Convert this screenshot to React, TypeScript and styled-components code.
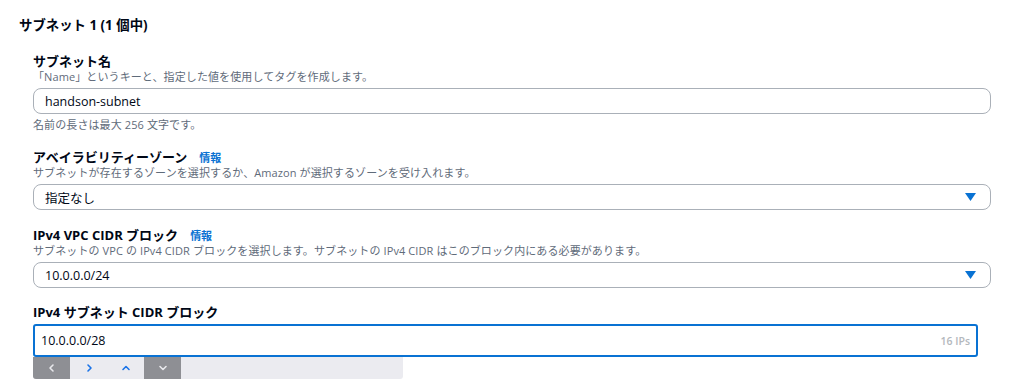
import React from "react";
import styled, { createGlobalStyle } from "styled-components";

const Global = createGlobalStyle`
  html, body { margin: 0; padding: 0; background: #ffffff; }
  body {
    font-family: "Open Sans", "Noto Sans", "Noto Sans CJK JP", sans-serif;
    color: #000716;
  }
`;

const Page = styled.div`
  width: 1024px;
  height: 385px;
  overflow: hidden;
  padding: 16px 33px 0 19px;
  box-sizing: border-box;
`;

const Heading = styled.h2`
  margin: 0 0 18px;
  font-size: 13.4px;
  font-weight: 700;
  line-height: 18px;
  font-family: "Open Sans", "Noto Sans CJK JP", sans-serif;
`;

const Fields = styled.div`
  padding-left: 14px;
  display: flex;
  flex-direction: column;
`;

const Field = styled.div<{ $gap: number }>`
  display: flex;
  flex-direction: column;
  margin-bottom: ${(p) => p.$gap}px;
`;

const LabelRow = styled.div`
  display: flex;
  align-items: baseline;
  gap: 12px;
  height: 18px;
`;

const Label = styled.span`
  font-size: 13px;
  font-weight: 700;
  line-height: 18px;
  font-family: "Open Sans", "Noto Sans CJK JP", sans-serif;
`;

const Info = styled.span`
  font-size: 11px;
  font-weight: 700;
  color: #0972d3;
  font-family: "Open Sans", "Noto Sans CJK JP", sans-serif;
`;

const Desc = styled.div`
  font-size: 11px;
  line-height: 14px;
  color: #5f6b7a;
  margin-bottom: 4px;
  letter-spacing: 0.1px;
  font-family: "Open Sans", "Noto Sans CJK JP", sans-serif;
`;

const Constraint = styled(Desc)`
  margin-top: 4px;
  margin-bottom: 0;
`;

const Box = styled.div`
  height: 26px;
  box-sizing: border-box;
  border: 1px solid #aab0b8;
  border-radius: 8px;
  display: flex;
  align-items: center;
  padding: 0 12px 0 11px;
  font-size: 12.5px;
  font-family: "Open Sans", "Noto Sans CJK JP", sans-serif;
  color: #000716;
`;

const Value = styled.span`
  flex: 1;
`;

const Caret = styled.svg`
  width: 11px;
  height: 8px;
  margin-right: 2px;
`;

const Focused = styled.div`
  height: 33px;
  width: 945px;
  box-sizing: border-box;
  border: 2px solid #0972d3;
  border-radius: 3px;
  display: flex;
  align-items: center;
  padding: 0 6px 0 6px;
  font-size: 12.5px;
  font-family: "Open Sans", "Noto Sans CJK JP", sans-serif;
  margin-top: 3px;
`;

const Suffix = styled.span`
  font-size: 10.5px;
  font-weight: 600;
  color: #b4b8bd;
`;

const Toolbar = styled.div`
  display: flex;
  width: 370px;
  height: 22px;
  background: #ebebf0;
  border-radius: 0 0 3px 3px;
  overflow: hidden;
`;

const ToolBtn = styled.div<{ $dark?: boolean }>`
  width: 37px;
  display: flex;
  align-items: center;
  justify-content: center;
  background: ${(p) => (p.$dark ? "#8e8f94" : "transparent")};
  color: ${(p) => (p.$dark ? "#e8e8ec" : "#1a73e8")};
`;

const Chev = ({ d }: { d: string }) => (
  <svg width="10" height="10" viewBox="0 0 10 10" fill="none">
    <path d={d} stroke="currentColor" strokeWidth="1.6" strokeLinecap="round" strokeLinejoin="round" />
  </svg>
);

const DownCaret = () => (
  <Caret viewBox="0 0 11 8">
    <path d="M0 0 H11 L5.5 8 Z" fill="#0972d3" />
  </Caret>
);

export default function App() {
  return (
    <>
      <Global />
      <Page>
        <Heading>サブネット 1 (1 個中)</Heading>
        <Fields>
          <Field $gap={16}>
            <LabelRow>
              <Label>サブネット名</Label>
            </LabelRow>
            <Desc>「Name」というキーと、指定した値を使用してタグを作成します。</Desc>
            <Box>
              <Value>handson-subnet</Value>
            </Box>
            <Constraint>名前の長さは最大 256 文字です。</Constraint>
          </Field>
          <Field $gap={16}>
            <LabelRow>
              <Label>アベイラビリティーゾーン</Label>
              <Info>情報</Info>
            </LabelRow>
            <Desc>サブネットが存在するゾーンを選択するか、Amazon が選択するゾーンを受け入れます。</Desc>
            <Box>
              <Value>指定なし</Value>
              <DownCaret />
            </Box>
          </Field>
          <Field $gap={15}>
            <LabelRow>
              <Label>IPv4 VPC CIDR ブロック</Label>
              <Info>情報</Info>
            </LabelRow>
            <Desc>サブネットの VPC の IPv4 CIDR ブロックを選択します。サブネットの IPv4 CIDR はこのブロック内にある必要があります。</Desc>
            <Box>
              <Value>10.0.0.0/24</Value>
              <DownCaret />
            </Box>
          </Field>
          <Field $gap={0}>
            <LabelRow>
              <Label>IPv4 サブネット CIDR ブロック</Label>
            </LabelRow>
            <Focused>
              <Value>10.0.0.0/28</Value>
              <Suffix>16 IPs</Suffix>
            </Focused>
            <Toolbar>
              <ToolBtn $dark>
                <Chev d="M6 2 L3 5 L6 8" />
              </ToolBtn>
              <ToolBtn>
                <Chev d="M4 2 L7 5 L4 8" />
              </ToolBtn>
              <ToolBtn>
                <Chev d="M2 6.5 L5 3.5 L8 6.5" />
              </ToolBtn>
              <ToolBtn $dark>
                <Chev d="M2 3.5 L5 6.5 L8 3.5" />
              </ToolBtn>
            </Toolbar>
          </Field>
        </Fields>
      </Page>
    </>
  );
}
